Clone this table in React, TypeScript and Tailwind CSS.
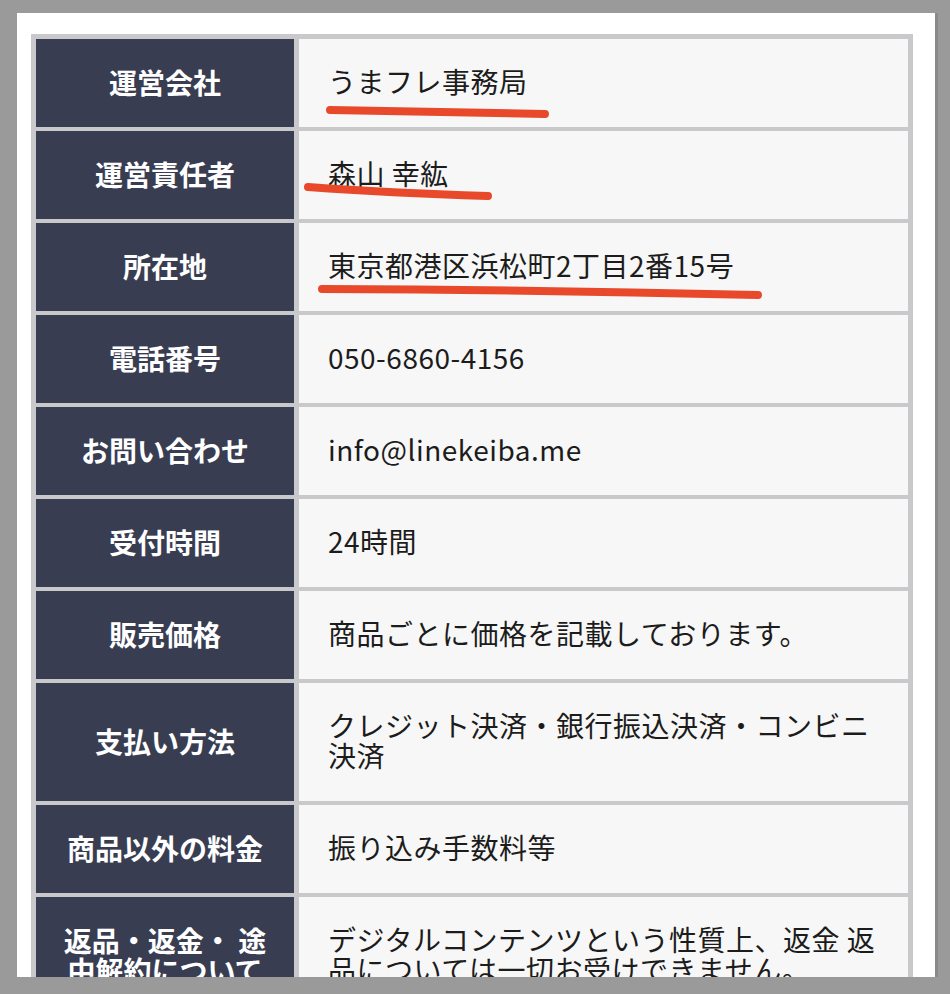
import { FC, ReactNode } from 'react';

interface Row {
  label: ReactNode;
  value: ReactNode;
  mark?: string;
}

const rows: Row[] = [
  { label: '運営会社', value: 'うまフレ事務局', mark: 'M31 71 Q140 73 246 75' },
  { label: '運営責任者', value: '森山 幸紘', mark: 'M9 56 Q90 62 189 65' },
  { label: '所在地', value: '東京都港区浜松町2丁目2番15号', mark: 'M23 66 Q240 67 459 72' },
  { label: '電話番号', value: '050-6860-4156' },
  { label: 'お問い合わせ', value: 'info@linekeiba.me' },
  { label: '受付時間', value: '24時間' },
  { label: '販売価格', value: '商品ごとに価格を記載しております。' },
  { label: '支払い方法', value: 'クレジット決済・銀行振込決済・コンビニ決済' },
  { label: '商品以外の料金', value: '振り込み手数料等' },
  {
    label: (
      <>
        返品・返金・ 途
        <br />
        中解約について
      </>
    ),
    value: 'デジタルコンテンツという性質上、返金 返品については一切お受けできません。',
  },
];

const App: FC = () => {
  return (
    <div
      className="w-[950px] h-[994px] bg-[#9a9a9a] pt-[13px] pl-[17px]"
      style={{ fontFamily: '"Noto Sans CJK JP", "Noto Sans", sans-serif' }}
    >
      <div className="w-[921px] h-[964px] bg-white overflow-hidden pt-[21px] pl-[14px] border-r-[3px] border-[#8a8a8a]">
        <div className="w-[882px] bg-[#c9c9cb] p-[5px] pb-0 grid grid-cols-[258px_609px] gap-x-[5px] gap-y-[4px]">
          {rows.map((row, i) => (
            <div key={i} className="contents">
              <div className="bg-[#393d52] text-white font-bold text-[28px] leading-[30px] text-center flex items-center justify-center px-[20px] pt-[28px] pb-[30px]">
                <span>{row.label}</span>
              </div>
              <div className="relative bg-[#f7f7f7] text-[#1c1c1c] text-[28px] leading-[30px] tracking-[0.5px] flex items-center pl-[29px] pr-[26px] pt-[27px] pb-[31px]">
                <span>{row.value}</span>
                {row.mark && (
                  <svg className="absolute left-0 top-0 w-[609px] h-[88px] pointer-events-none" viewBox="0 0 609 88">
                    <path d={row.mark} fill="none" stroke="#e8492a" strokeWidth="8" strokeLinecap="round" />
                  </svg>
                )}
              </div>
            </div>
          ))}
        </div>
      </div>
    </div>
  );
};

export default App;
